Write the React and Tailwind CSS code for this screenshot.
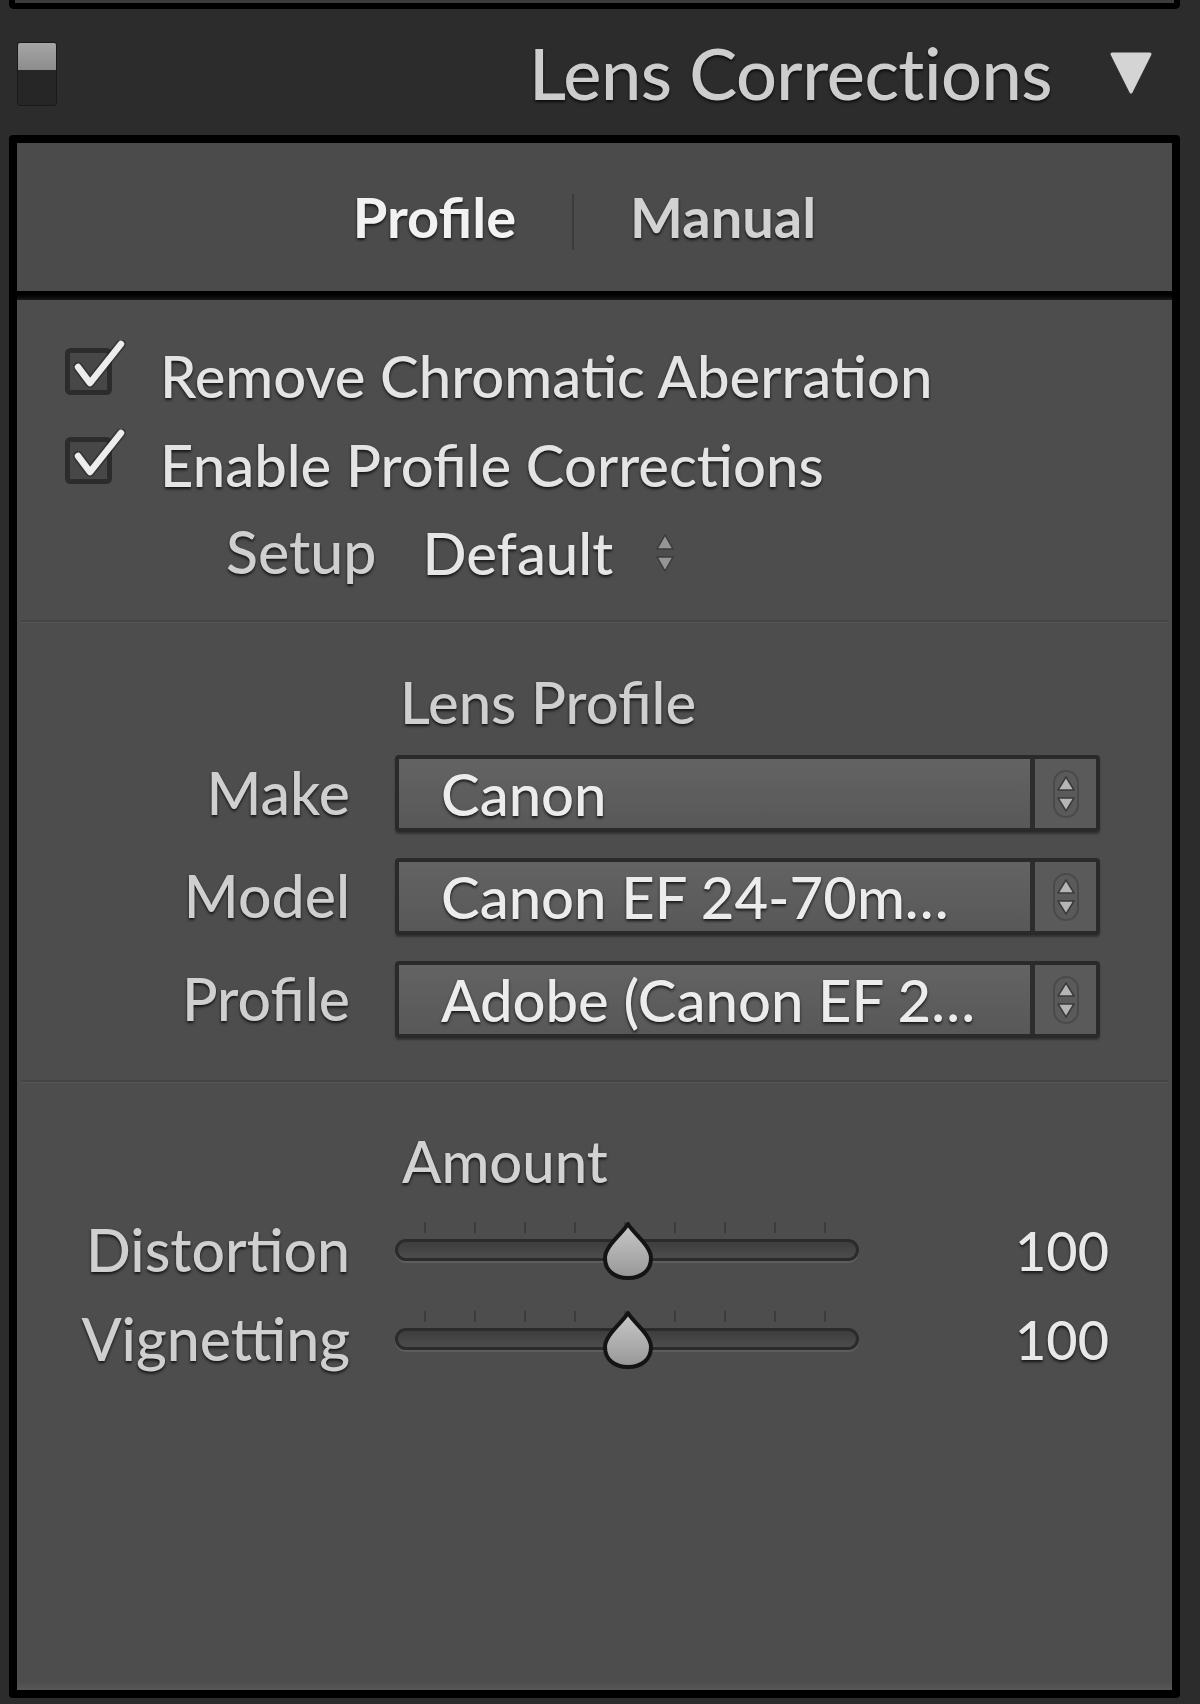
import React from 'react';

const shadow = '[text-shadow:0_2px_3px_rgba(0,0,0,0.75)]';

function Checkbox() {
  return (
    <svg width="62" height="58" viewBox="0 0 62 58" className="shrink-0">
      <rect x="2.5" y="10.5" width="42" height="42" rx="3" fill="#474747" stroke="#2c2c2c" strokeWidth="5" />
      <path d="M13 27 L25 43 L56 4" fill="none" stroke="#1f1f1f" strokeWidth="10" strokeLinecap="round" strokeLinejoin="round" opacity="0.45" />
      <path d="M13 27 L25 43 L56 4" fill="none" stroke="#ededed" strokeWidth="6.5" strokeLinecap="round" strokeLinejoin="round" />
    </svg>
  );
}

function CheckRow({ label }) {
  return (
    <div className="flex items-center h-[89px] pl-[48px]">
      <div className="-mt-[14px]">
        <Checkbox />
      </div>
      <span className={`ml-[33px] text-[58px] font-medium text-[#e4e4e4] ${shadow}`}>{label}</span>
    </div>
  );
}

function UpDown({ className = '', color = '#b5b5b5', big = false }) {
  if (big) {
    return (
      <svg width="30" height="50" viewBox="0 0 30 50" className={className}>
        <rect x="3" y="2" width="24" height="46" rx="12" fill="none" stroke="#4a4a4a" strokeWidth="2" />
        <path d="M15 8 L23 21 L7 21 Z" fill={color} stroke="#3a3a3a" strokeWidth="1.5" strokeLinejoin="round" />
        <path d="M15 42 L23 29 L7 29 Z" fill={color} stroke="#3a3a3a" strokeWidth="1.5" strokeLinejoin="round" />
      </svg>
    );
  }
  return (
    <svg width="24" height="44" viewBox="0 0 24 44" className={className}>
      <path d="M12 4 L20 18 L4 18 Z" fill={color} stroke="#3a3a3a" strokeWidth="1.5" strokeLinejoin="round" />
      <path d="M12 40 L20 26 L4 26 Z" fill={color} stroke="#3a3a3a" strokeWidth="1.5" strokeLinejoin="round" />
    </svg>
  );
}

function Select({ label, value }) {
  return (
    <div className="flex items-center h-[77px]">
      <div className={`w-[333px] text-right text-[59px] font-medium text-[#cfcfcf] ${shadow}`}>{label}</div>
      <div className="ml-[45px] w-[705px] h-[77px] flex rounded-[4px] border-[4px] border-[#2a2a2a] bg-gradient-to-b from-[#636363] to-[#585858] shadow-[0_2px_2px_rgba(0,0,0,0.35)]">
        <div className={`flex-1 flex items-center pl-[42px] text-[58px] font-medium text-[#ececec] ${shadow} leading-none`}>
          {value}
        </div>
        <div className="w-[66px] border-l-[5px] border-[#2d2d2d] flex items-center justify-center bg-[#5a5a5a]">
          <UpDown big />
        </div>
      </div>
    </div>
  );
}

function Slider({ label, value }) {
  const ticks = [0, 1, 2, 3, 4, 5, 6, 7, 8];
  return (
    <div className="flex items-center h-[89px]">
      <div className={`w-[333px] text-right text-[59px] font-medium text-[#cfcfcf] ${shadow}`}>{label}</div>
      <div className="ml-[45px] relative w-[464px] h-[62px]">
        {ticks.map((i) => (
          <div key={i} className="absolute top-[2px] w-[2px] h-[11px] bg-[#3c3c3c]" style={{ left: 29 + i * 50 }} />
        ))}
        <div className="absolute left-0 right-0 top-[19px] h-[22px] rounded-full border-[3px] border-[#2b2b2b] bg-gradient-to-b from-[#3e3e3e] to-[#4c4c4c] shadow-[0_2px_0_rgba(110,110,110,0.5)]" />
        <svg width="60" height="62" viewBox="0 0 60 62" className="absolute left-[203px] top-0">
          <path d="M30 4 C36 14 53 26 53 38 C53 51 43 58 30 58 C17 58 7 51 7 38 C7 26 24 14 30 4 Z" fill="url(#thumbg)" stroke="#141414" strokeWidth="4" strokeLinejoin="round" />
          <defs>
            <linearGradient id="thumbg" x1="0" y1="0" x2="0" y2="1">
              <stop offset="0" stopColor="#c9c9c9" />
              <stop offset="1" stopColor="#979797" />
            </linearGradient>
          </defs>
        </svg>
      </div>
      <div className={`w-[250px] text-right text-[54px] font-medium text-[#e8e8e8] ${shadow}`}>{value}</div>
    </div>
  );
}

function Divider() {
  return (
    <div className="mx-[4px]">
      <div className="h-[2px] bg-[#444444]" />
      <div className="h-[1px] bg-[#565656]" />
    </div>
  );
}

export default function App() {
  return (
    <div className="w-[1200px] h-[1704px] overflow-hidden bg-[#2c2c2c] font-['Lato','Open_Sans',sans-serif]">
      {/* tail of the panel above */}
      <div className="ml-[9px] w-[1171px] h-[9px] rounded-b-[5px] border-x-[6px] border-b-[6px] border-black bg-[#3c3c3c]" />

      {/* Header */}
      <div className="flex items-center h-[126px] pl-[17px] pr-[46px]">
        <div className="w-[40px] h-[64px] mt-[4px] rounded-[3px] border border-[#1a1a1a] bg-[#262626] overflow-hidden">
          <div className="h-[27px] bg-gradient-to-b from-[#a6a6a6] to-[#8c8c8c]" />
        </div>
        <div className="flex-1" />
        <span className={`text-[72px] font-medium text-[#cdcdcd] tracking-[-0.5px] ${shadow}`}>Lens Corrections</span>
        <svg width="46" height="48" viewBox="0 0 46 48" className="ml-[56px]">
          <path d="M4 6 L42 6 L23 44 Z" fill="#d4d4d4" stroke="#d4d4d4" strokeWidth="3" strokeLinejoin="round" />
        </svg>
      </div>

      {/* Panel */}
      <div className="ml-[9px] w-[1171px] h-[1563px] border-[8px] border-black rounded-[4px] bg-[#4d4d4d] flex flex-col shadow-[inset_0_-8px_6px_-4px_rgba(100,100,100,0.5)]">
        {/* Tabs */}
        <div className="h-[148px] flex items-center justify-center pr-[20px] bg-[#4b4b4b]">
          <span className={`text-[56px] font-bold text-[#f2f2f2] ${shadow}`}>Profile</span>
          <div className="mx-[56px] w-[2px] h-[56px] bg-[#3b3b3b] mt-[10px]" />
          <span className={`text-[56px] font-bold text-[#d2d2d2] ${shadow}`}>Manual</span>
        </div>
        <div className="h-[9px] bg-gradient-to-b from-black to-[#1a1a1a]" />

        {/* Content */}
        <div className="flex-1 pt-[31px]">
          <CheckRow label="Remove Chromatic Aberration" />
          <CheckRow label="Enable Profile Corrections" />
          <div className="flex items-center h-[87px] pl-[209px]">
            <span className={`text-[59px] font-medium text-[#cfcfcf] ${shadow}`}>Setup</span>
            <span className={`ml-[46px] text-[58px] font-medium text-[#e6e6e6] ${shadow}`}>Default</span>
            <UpDown className="ml-[40px]" color="#959595" />
          </div>
          <div className="h-[24px]" />
          <Divider />

          <div className="mt-[37px] h-[82px] flex items-center pl-[383px]">
            <span className={`text-[58px] font-medium text-[#cfcfcf] ${shadow}`}>Lens Profile</span>
          </div>
          <div className="mt-[13px] flex flex-col gap-[26px]">
            <Select label="Make" value="Canon" />
            <Select label="Model" value="Canon EF 24-70m…" />
            <Select label="Profile" value="Adobe (Canon EF 2…" />
          </div>
          <div className="h-[42px]" />
          <Divider />

          <div className="mt-[39px] h-[76px] flex items-center pl-[385px]">
            <span className={`text-[58px] font-medium text-[#d2d2d2] ${shadow}`}>Amount</span>
          </div>
          <div className="mt-[8px]">
            <Slider label="Distortion" value="100" />
            <Slider label="Vignetting" value="100" />
          </div>
        </div>
      </div>
    </div>
  );
}
